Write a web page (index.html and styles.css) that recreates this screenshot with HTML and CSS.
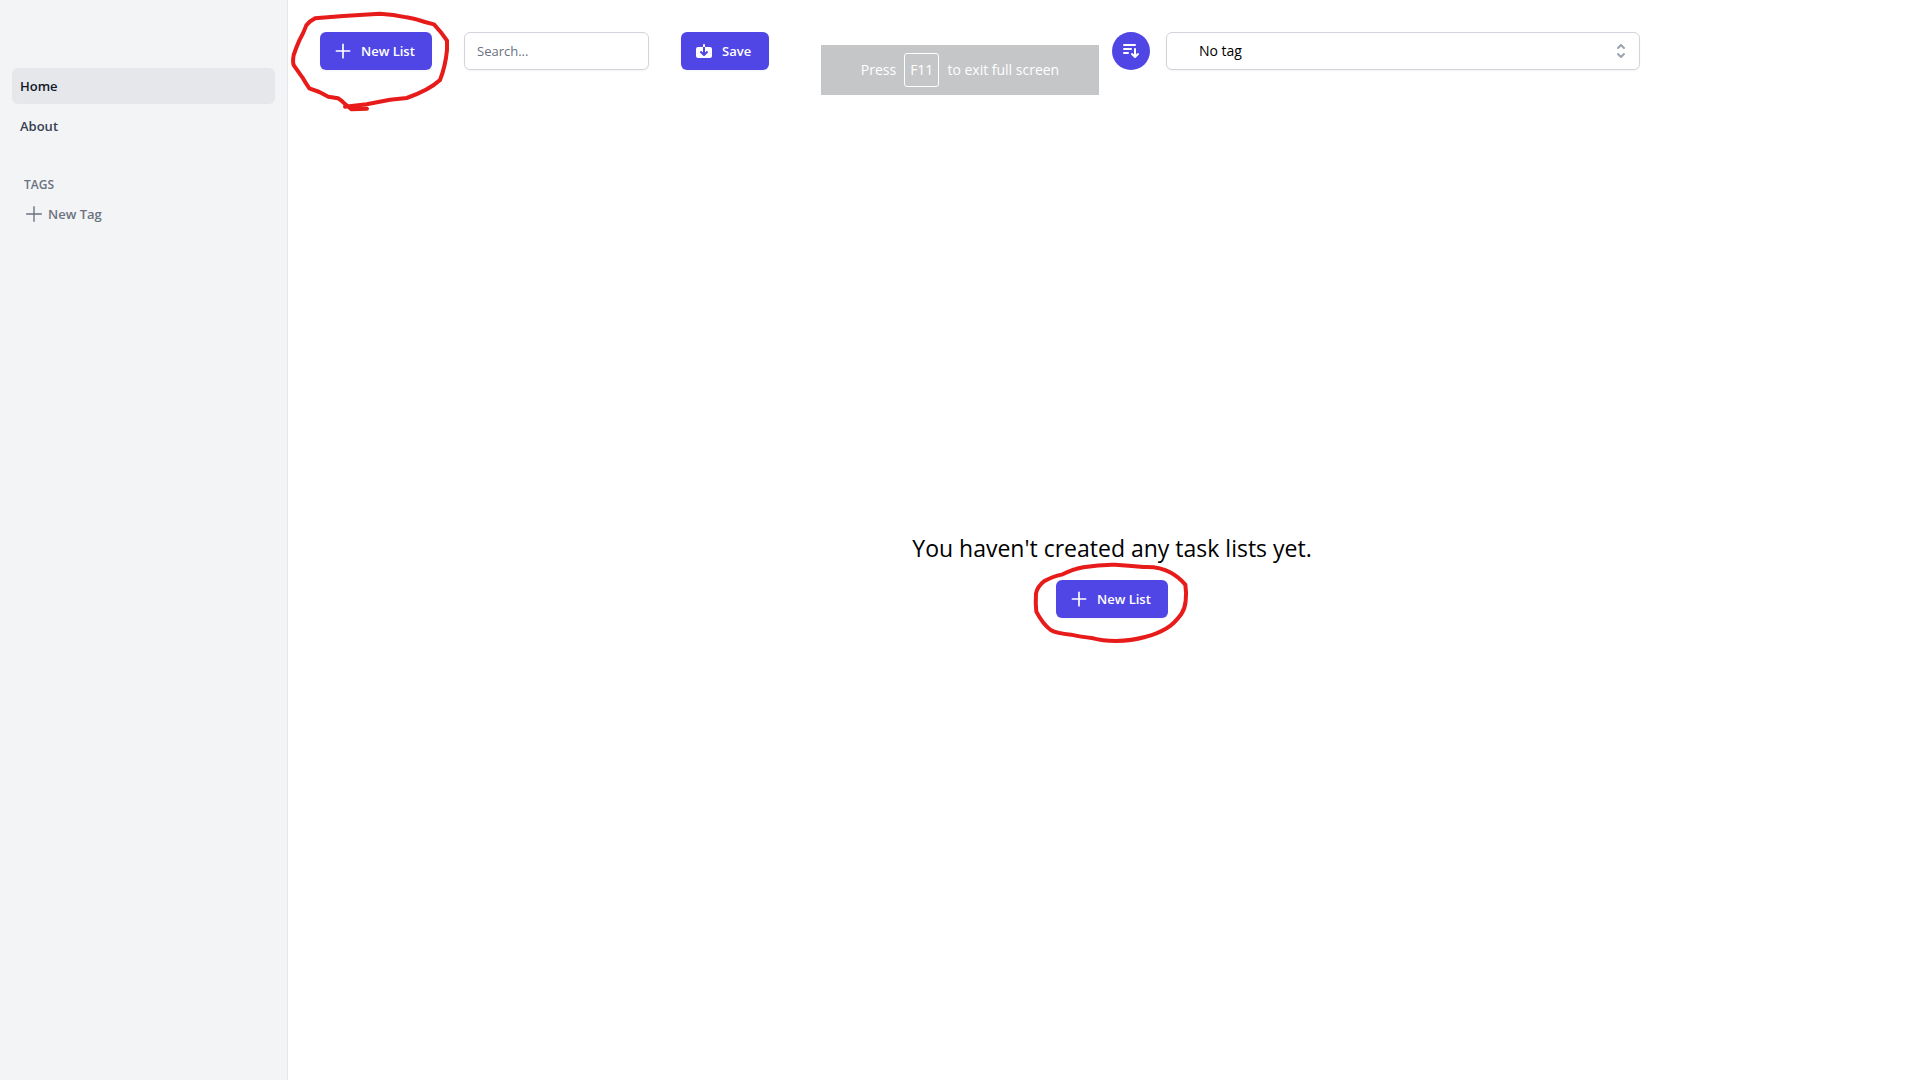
FILE: index.html
```html
<!DOCTYPE html>
<html lang="en">
<head>
  <meta charset="utf-8">
  <meta name="viewport" content="width=device-width, initial-scale=1">
  <title>Task lists</title>
  <link rel="stylesheet" href="styles.css">
</head>
<body>
  <div class="app">
    <aside class="sidebar">
      <nav class="nav" aria-label="Main">
        <a class="nav-link nav-link-active" href="#home" aria-current="page">Home</a>
        <a class="nav-link" href="#about">About</a>
      </nav>
      <section class="tags">
        <h2 class="tags-title">TAGS</h2>
        <button class="tag-button" type="button">
          <svg class="icon-large" viewBox="0 0 24 24" aria-hidden="true"><path class="line" d="M12 4v16m8-8H4"/></svg>
          New Tag
        </button>
      </section>
    </aside>

    <main class="main">
      <header class="toolbar">
        <div class="actions">
          <div class="marked">
            <button class="button" type="button">
              <svg class="icon" viewBox="0 0 24 24" aria-hidden="true"><path class="line line-bold" d="M12 4v16m8-8H4"/></svg>
              New List
            </button>
            <svg class="mark mark-top" viewBox="0 0 540 360" aria-hidden="true">
              <path d="M105 55L190 48L300 41Q340 43 380 52Q410 57 435 66L462 73Q484 96 501 122V150Q496 200 480 240Q448 270 380 294L330 299Q295 306 260 313L195 320M105 55Q90 62 79 76Q70 100 59 119Q48 144 41 165Q37 188 42 197L67 232Q76 248 88 265L118 276L145 290L174 295Q186 302 195 312L215 328L261 326"/>
            </svg>
          </div>
          <input class="search" type="search" placeholder="Search..." aria-label="Search">
          <button class="button button-save" type="button">
            <svg class="icon" viewBox="0 0 20 20" fill="currentColor" aria-hidden="true"><path d="M7.707 10.293a1 1 0 10-1.414 1.414l3 3a1 1 0 001.414 0l3-3a1 1 0 00-1.414-1.414L11 11.586V6h5a2 2 0 012 2v7a2 2 0 01-2 2H4a2 2 0 01-2-2V8a2 2 0 012-2h5v5.586l-1.293-1.293zM9 4a1 1 0 012 0v2H9V4z"/></svg>
            Save
          </button>
        </div>
        <div class="filters">
          <button class="sort" type="button" aria-label="Sort">
            <svg class="icon-plain" viewBox="0 0 20 20" fill="currentColor" aria-hidden="true"><path d="M3 3a1 1 0 000 2h11a1 1 0 100-2H3zM3 7a1 1 0 000 2h7a1 1 0 100-2H3zM3 11a1 1 0 100 2h4a1 1 0 100-2H3zM15 8a1 1 0 10-2 0v5.586l-1.293-1.293a1 1 0 00-1.414 1.414l3 3a1 1 0 001.414 0l3-3a1 1 0 00-1.414-1.414L15 13.586V8z"/></svg>
          </button>
          <div class="select-wrap">
            <select class="select" aria-label="Tag">
              <option>No tag</option>
            </select>
            <svg class="select-icon" viewBox="0 0 20 20" fill="currentColor" aria-hidden="true"><path d="M10 3a1 1 0 01.707.293l3 3a1 1 0 01-1.414 1.414L10 5.414 7.707 7.707a1 1 0 01-1.414-1.414l3-3A1 1 0 0110 3zm-3.707 9.293a1 1 0 011.414 0L10 14.586l2.293-2.293a1 1 0 011.414 1.414l-3 3a1 1 0 01-1.414 0l-3-3a1 1 0 010-1.414z"/></svg>
          </div>
        </div>
      </header>

      <section class="empty">
        <p class="empty-text">You haven't created any task lists yet.</p>
        <div class="marked">
          <button class="button" type="button">
            <svg class="icon" viewBox="0 0 24 24" aria-hidden="true"><path class="line line-bold" d="M12 4v16m8-8H4"/></svg>
            New List
          </button>
          <svg class="mark mark-center" viewBox="0 0 540 300" aria-hidden="true">
            <path d="M128 73Q155 59 190 52Q240 43 285 44Q325 46 370 51Q420 49 450 67Q475 80 496 104Q500 130 497 153Q495 175 484 192Q462 222 440 235Q410 253 375 261Q335 272 288 273Q245 272 220 265Q180 260 153 254Q110 250 92 240Q68 222 49 185Q46 160 48 130Q53 108 72 94Q95 80 128 73Z"/>
          </svg>
        </div>
      </section>
    </main>
  </div>

  <div class="toast" role="status">
    <span>Press</span>
    <kbd class="key">F11</kbd>
    <span>to exit full screen</span>
  </div>
</body>
</html>
```

FILE: styles.css
```css
*,
*::before,
*::after {
  box-sizing: border-box;
}

body {
  margin: 0;
  background: #fff;
  color: #000;
  font-family: "Open Sans", "Noto Sans", sans-serif;
  font-size: 13px;
  line-height: 20px;
}

button,
input,
select {
  font: inherit;
}

button {
  cursor: pointer;
}

.app {
  display: flex;
  min-height: 100vh;
}

/* Sidebar */
.sidebar {
  flex: 0 0 288px;
  padding: 68px 12px 16px;
  border-right: 1px solid #e5e7eb;
  background: #f3f4f6;
}

.nav {
  display: flex;
  flex-direction: column;
  gap: 4px;
}

.nav-link {
  padding: 8px;
  border-radius: 6px;
  color: #374151;
  font-weight: 600;
  text-decoration: none;
}

.nav-link-active {
  background: #e5e7eb;
  color: #111827;
}

.tags {
  margin-top: 33px;
}

.tags-title {
  margin: 0;
  padding: 0 12px;
  color: #6b7280;
  font-size: 12px;
  font-weight: 600;
  line-height: 16px;
}

.tag-button {
  display: flex;
  align-items: center;
  gap: 3px;
  margin-top: 8px;
  padding: 2px 11px;
  border: 0;
  background: none;
  color: #6b7280;
  font-weight: 600;
}

/* Icons */
.icon,
.icon-plain {
  width: 20px;
  height: 20px;
}

.icon {
  margin-left: -4px;
}

.icon-large {
  width: 22px;
  height: 22px;
}

.line {
  fill: none;
  stroke: currentColor;
  stroke-linecap: round;
  stroke-width: 1.5;
}

.line-bold {
  stroke-width: 2;
}

/* Main area */
.main {
  display: flex;
  flex: 1;
  flex-direction: column;
  min-width: 0;
  padding: 32px 16px 0 32px;
}

.toolbar {
  display: grid;
  grid-template-columns: 1fr 1fr;
}

.actions {
  display: flex;
  gap: 32px;
}

.filters {
  display: flex;
  gap: 16px;
  width: 66.67%;
}

.button {
  display: flex;
  align-items: center;
  gap: 8px;
  min-width: 112px;
  height: 38px;
  padding: 0 16px;
  border: 1px solid transparent;
  border-radius: 6px;
  background: #4f46e5;
  box-shadow: 0 1px 2px rgba(0, 0, 0, 0.05);
  color: #fff;
  font-weight: 600;
  white-space: nowrap;
}

.button-save {
  min-width: 88px;
}

.search,
.select {
  height: 38px;
  border: 1px solid #d1d5db;
  border-radius: 6px;
  background: #fff;
  box-shadow: 0 1px 2px rgba(0, 0, 0, 0.05);
  appearance: none;
}

.search {
  width: 185px;
  padding: 8px 12px;
}

.search::placeholder {
  color: #6b7280;
}

.sort {
  display: flex;
  flex: 0 0 38px;
  align-items: center;
  justify-content: center;
  height: 38px;
  padding: 0;
  border: 0;
  border-radius: 50%;
  background: #4f46e5;
  color: #fff;
}

.select-wrap {
  position: relative;
  flex: 1;
}

.select {
  width: 100%;
  padding: 0 40px 0 32px;
  color: #000;
  font-size: 14px;
}

.select-icon {
  position: absolute;
  top: 9px;
  right: 9px;
  width: 20px;
  height: 20px;
  color: #9ca3af;
  pointer-events: none;
}

.empty {
  display: flex;
  flex: 1;
  flex-direction: column;
  align-items: center;
  justify-content: center;
  gap: 16px;
}

.empty-text {
  margin: 0;
  font-size: 23px;
  line-height: 32px;
}

/* Hand-drawn rings over the buttons */
.marked {
  position: relative;
}

.mark {
  position: absolute;
  width: 180px;
  fill: none;
  stroke: #e81b1b;
  stroke-linecap: round;
  stroke-linejoin: round;
  stroke-width: 12;
  pointer-events: none;
}

.mark-top {
  top: -32px;
  left: -40px;
  height: 120px;
}

.mark-center {
  top: -30px;
  left: -36px;
  height: 100px;
}

/* Full screen hint */
.toast {
  position: fixed;
  top: 45px;
  left: 50%;
  display: flex;
  align-items: center;
  justify-content: center;
  gap: 8px;
  width: 278px;
  height: 50px;
  background: #c5c6c8;
  color: #fff;
  font-size: 14px;
  transform: translateX(-50%);
  white-space: nowrap;
}

.key {
  padding: 6px 5px;
  border: 1px solid #fff;
  border-radius: 3px;
  font: inherit;
}
```
